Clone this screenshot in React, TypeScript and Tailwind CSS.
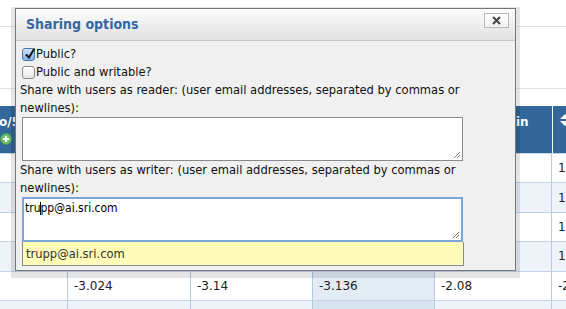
import React from 'react';

const rows = [
  ['', '-2.871', '-2.904', '-2.915', '-1.93', '1'],
  ['', '-2.412', '-2.55', '-2.603', '-1.77', '1'],
  ['', '-1.998', '-2.12', '-2.087', '-1.52', '1'],
  ['', '-2.306', '-2.31', '-2.274', '-1.66', '1'],
  ['', '-3.024', '-3.14', '-3.136', '-2.08', '-2'],
  ['', '-1.219', '-1.421', '-1.097', '-2.419', '-1'],
];

const Grip = () => (
  <svg className="absolute right-[1px] bottom-[1px]" width="8" height="8" viewBox="0 0 8 8">
    <path d="M7 1L1 7M7 4L4 7" stroke="#7a7a7a" strokeWidth="1" fill="none" />
  </svg>
);

const CheckedBox = () => (
  <span className="relative inline-block w-[13px] h-[13px] rounded-[3px] border border-[#4f7bab] bg-gradient-to-b from-[#cfe2f7] to-[#7fb0e4]">
    <svg className="absolute left-[1px] -top-[2px]" width="12" height="13" viewBox="0 0 12 13">
      <path d="M2 7.5L5 10.5L10.5 1.5" stroke="#111" strokeWidth="2" fill="none" />
    </svg>
  </span>
);

const EmptyBox = () => (
  <span className="inline-block w-[13px] h-[13px] rounded-[3px] border border-[#8a8a8a] bg-gradient-to-b from-white to-[#e6e6e6]" />
);

export default function App() {
  return (
    <div className="relative w-[566px] h-[309px] overflow-hidden bg-white font-['DejaVu_Sans',sans-serif]">
      {/* page behind the dialog */}
      <div className="h-[27px] border-b border-[#e2e2e2]" />
      <div className="h-[62px] border-b border-[#e2e2e2]" />
      <div className="h-[17px]" />
      <div className="grid grid-cols-[68px_123px_122px_122px_117px_1fr] h-[47px] bg-[#336699] text-white font-bold text-[12px] leading-[16px]">
        <div className="pt-[8px] -ml-[1px]">
          <div>o/5</div>
          <svg className="mt-[3px] ml-[1px]" width="12" height="12" viewBox="0 0 12 12">
            <circle cx="6" cy="6" r="5.5" fill="#6cbf6a" stroke="#4a9a48" strokeWidth="0.8" />
            <path d="M6 3v6M3 6h6" stroke="white" strokeWidth="2" />
          </svg>
        </div>
        <div className="pt-[8px] pl-[6px]">Avg score</div>
        <div className="pt-[8px] pl-[6px]">Median</div>
        <div className="pt-[8px] pl-[6px]">Mean</div>
        <div className="pt-[8px] pl-[69px]">Min</div>
        <div className="border-l border-white pt-[8px] pl-[7px]">
          <svg width="10" height="12" viewBox="0 0 10 12">
            <path d="M5 0L10 5H0Z M5 12L10 7H0Z" fill="white" />
          </svg>
        </div>
      </div>
      {rows.map((r, i) => (
        <div
          key={i}
          className={`grid grid-cols-[68px_123px_122px_122px_117px_1fr] h-[29.4px] border-t border-[#c3d4e8] text-[12px] text-[#222] ${i % 2 ? 'bg-[#eef2f9]' : 'bg-white'}`}
        >
          {r.map((v, j) => (
            <div
              key={j}
              className={`flex items-center pl-[6px] border-r border-[#b5cbe3] ${j === 3 ? (i % 2 ? 'bg-[#d9e4f1]' : 'bg-[#e3ebf5]') : ''}`}
            >
              {v}
            </div>
          ))}
        </div>
      ))}

      {/* sharing dialog */}
      <div className="absolute left-[15px] top-[8px] w-[501px] border border-[#777] bg-[#f0f0f0] shadow-[0_3px_0_4px_rgba(0,0,0,0.1)] font-['DejaVu_Sans_Condensed','DejaVu_Sans',sans-serif]">
        <div className="flex items-start justify-between h-[32px] pl-[10px] pr-[6px] border-b border-[#c6c6c6] bg-gradient-to-b from-[#fdfdfd] to-[#e1e1e1]">
          <span className="self-center pb-[1px] text-[14px] font-bold text-[#3368a0]">Sharing options</span>
          <button className="mt-[4px] w-[25px] h-[15px] flex items-center justify-center border border-[#b9b9b9] bg-gradient-to-b from-white to-[#f1f1f1]">
            <svg width="9" height="9" viewBox="0 0 9 9">
              <path d="M1 1L8 8M8 1L1 8" stroke="#444" strokeWidth="2" />
            </svg>
          </button>
        </div>
        <div className="px-[4px] pt-[4px] pb-[4px] text-[12.8px] leading-[18px] text-[#111]">
          <div className="flex items-center h-[18px] pl-[2px] gap-[1px]">
            <CheckedBox />
            <span>Public?</span>
          </div>
          <div className="flex items-center h-[18px] pl-[2px] gap-[1px]">
            <EmptyBox />
            <span>Public and writable?</span>
          </div>
          <p className="w-[465px]">Share with users as reader: (user email addresses, separated by commas or newlines):</p>
          <div className="relative ml-[2px] w-[441px] h-[44px] border border-[#8a8a8a] bg-white">
            <Grip />
          </div>
          <p className="w-[465px]">Share with users as writer: (user email addresses, separated by commas or newlines):</p>
          <div className="relative ml-[2px] w-[441px] h-[45px] border-2 border-[#7ca6d9] bg-white pl-[1px] pt-[1px] text-[12px] leading-[16px] text-black">
            tru<span className="inline-block w-[1px] h-[13px] -mx-[0.5px] align-middle bg-black" />pp@ai.sri.com
            <Grip />
          </div>
          <div className="ml-[2px] w-[442px] h-[24px] flex items-center pl-[3px] border border-t-0 border-[#8a8a8a] bg-[#fffbb8] text-[#333]">
            trupp@ai.sri.com
          </div>
        </div>
      </div>
    </div>
  );
}
